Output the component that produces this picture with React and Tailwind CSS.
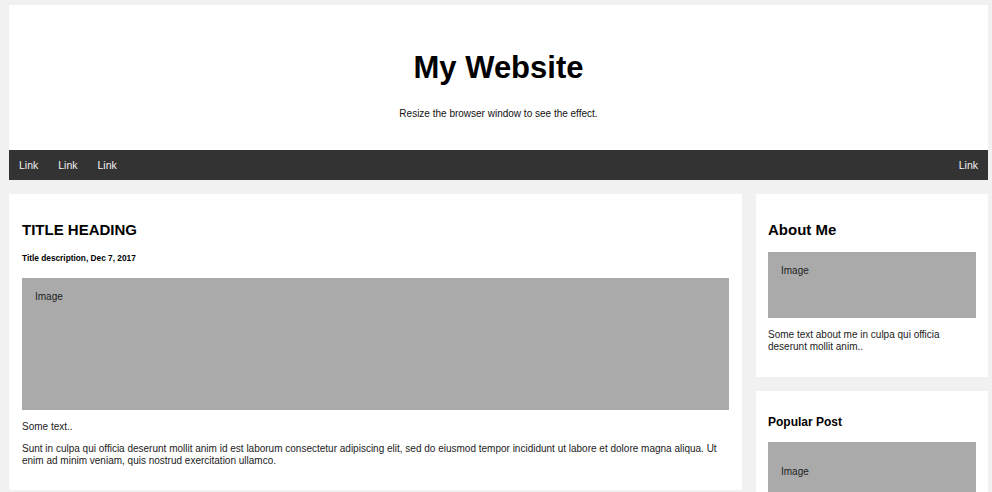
export default function App() {
  return (
    <div className="h-screen overflow-hidden bg-[#f1f1f1] pt-[5px] pl-[9px] pr-[4px] font-['Liberation_Sans',Arial,sans-serif] text-black">
      <header className="h-[145px] bg-white flex flex-col items-center">
        <h1 className="mt-[45px] text-[31px] leading-[36px] font-bold">My Website</h1>
        <p className="mt-[22px] text-[10px] leading-[12px] text-[#111]">Resize the browser window to see the effect.</p>
      </header>
      <nav className="h-[30px] bg-[#333] flex items-center justify-between text-[10.5px] leading-[12px] text-[#f2f2f2]">
        <div className="flex">
          <a className="px-[10px]">Link</a>
          <a className="px-[10px]">Link</a>
          <a className="px-[10px]">Link</a>
        </div>
        <a className="px-[10px]">Link</a>
      </nav>
      <div className="mt-[14px] flex gap-[14px] items-start">
        <div className="w-[733px] shrink-0 bg-white p-[13px]">
          <h2 className="mt-[14px] text-[15px] leading-[18px] font-bold">TITLE HEADING</h2>
          <h5 className="mt-[14px] text-[8.3px] leading-[10px] font-bold">Title description, Dec 7, 2017</h5>
          <div className="mt-[15px] h-[132px] bg-[#aaa] p-[13px] text-[10px] leading-[12px] text-[#222]">Image</div>
          <p className="mt-[11px] text-[10px] leading-[12px] text-[#222]">Some text..</p>
          <p className="mt-[10px] mb-[10px] text-[10px] leading-[12px] text-[#222]">
            Sunt in culpa qui officia deserunt mollit anim id est laborum consectetur adipiscing elit, sed do eiusmod tempor incididunt ut labore et dolore magna aliqua. Ut enim ad minim veniam, quis nostrud exercitation ullamco.
          </p>
        </div>
        <div className="flex-1 flex flex-col gap-[14px]">
          <div className="bg-white px-[12px] py-[13px]">
            <h2 className="mt-[14px] text-[15px] leading-[18px] font-bold">About Me</h2>
            <div className="mt-[13px] h-[66px] bg-[#aaa] p-[13px] text-[10px] leading-[12px] text-[#222]">Image</div>
            <p className="mt-[11px] mb-[11px] text-[10px] leading-[12px] text-[#222]">Some text about me in culpa qui officia deserunt mollit anim..</p>
          </div>
          <div className="bg-white px-[12px] py-[13px]">
            <h3 className="mt-[11px] text-[12px] leading-[14px] font-bold">Popular Post</h3>
            <div className="mt-[13px] bg-[#aaa] px-[13px] pt-[24px] pb-[23px] text-[10px] leading-[12px] text-[#222]">
              <p>Image</p>
            </div>
          </div>
        </div>
      </div>
    </div>
  );
}
